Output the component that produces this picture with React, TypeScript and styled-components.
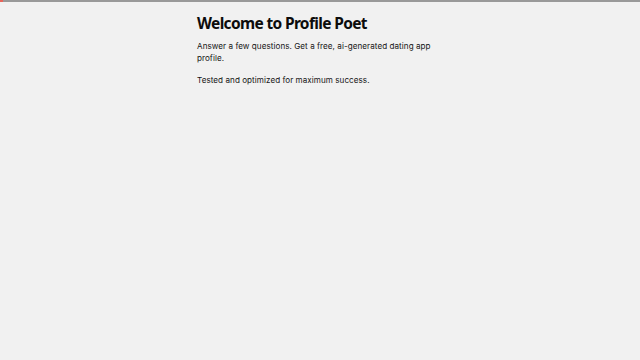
import React from "react";
import styled, { createGlobalStyle } from "styled-components";

const GlobalStyle = createGlobalStyle`
  html, body {
    margin: 0;
    padding: 0;
    background: #f1f1f1;
  }
  body {
    font-family: Inter, "Liberation Sans", sans-serif;
    color: #111;
  }
`;

const Progress = styled.div`
  height: 2px;
  background: #999999;
  display: flex;
`;

const ProgressFill = styled.div`
  height: 100%;
  background: #e8645a;
`;

const Main = styled.main`
  width: 246px;
  margin: 0 auto;
  padding-top: 11px;
`;

const Title = styled.h1`
  font-family: "Noto Sans", "Open Sans", sans-serif;
  font-weight: 700;
  font-size: 15.5px;
  line-height: 20px;
  letter-spacing: -0.65px;
  margin: 0 0 8px;
  color: #0c0c0c;
`;

const Text = styled.p`
  font-size: 8.1px;
  line-height: 11.5px;
  letter-spacing: 0.05px;
  margin: 0 0 10.5px;
  color: #151515;
`;

const App = () => {
  const progress = 0.005;
  return (
    <>
      <GlobalStyle />
      <Progress>
        <ProgressFill style={{ width: `${Math.max(progress * 100, 0.5)}%` }} />
      </Progress>
      <Main>
        <Title>Welcome to Profile Poet</Title>
        <Text>Answer a few questions. Get a free, ai-generated dating app profile.</Text>
        <Text>Tested and optimized for maximum success.</Text>
      </Main>
    </>
  );
};

export default App;
